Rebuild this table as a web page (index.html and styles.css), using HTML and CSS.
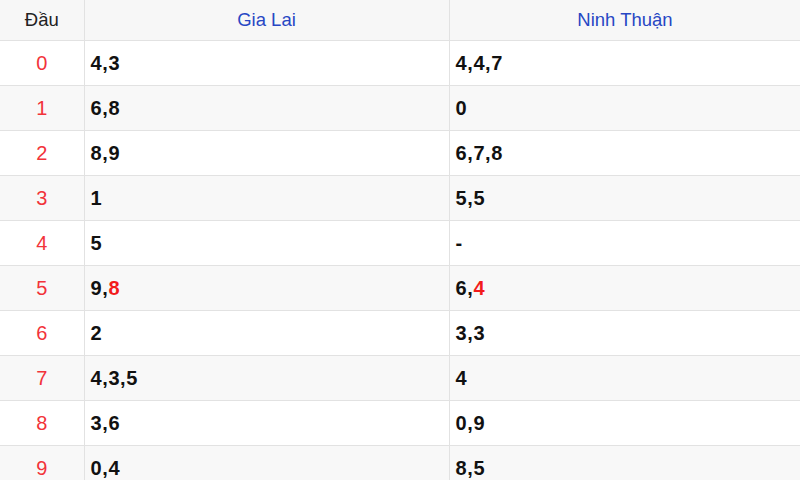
FILE: index.html
```html
<!DOCTYPE html>
<html>
<head>
<meta charset="utf-8">
<link rel="stylesheet" href="styles.css">
</head>
<body>
<table class="loto">
  <colgroup>
    <col class="c-head">
    <col class="c-a">
    <col class="c-b">
  </colgroup>
  <thead>
    <tr><th>Đầu</th><th class="prov">Gia Lai</th><th class="prov">Ninh Thuận</th></tr>
  </thead>
  <tbody>
    <tr><td class="dau">0</td><td class="num">4,3</td><td class="num">4,4,7</td></tr>
    <tr><td class="dau">1</td><td class="num">6,8</td><td class="num">0</td></tr>
    <tr><td class="dau">2</td><td class="num">8,9</td><td class="num">6,7,8</td></tr>
    <tr><td class="dau">3</td><td class="num">1</td><td class="num">5,5</td></tr>
    <tr><td class="dau">4</td><td class="num">5</td><td class="num">-</td></tr>
    <tr><td class="dau">5</td><td class="num">9,<span class="hot">8</span></td><td class="num">6,<span class="hot">4</span></td></tr>
    <tr><td class="dau">6</td><td class="num">2</td><td class="num">3,3</td></tr>
    <tr><td class="dau">7</td><td class="num">4,3,5</td><td class="num">4</td></tr>
    <tr><td class="dau">8</td><td class="num">3,6</td><td class="num">0,9</td></tr>
    <tr><td class="dau">9</td><td class="num">0,4</td><td class="num">8,5</td></tr>
  </tbody>
</table>
</body>
</html>
```
FILE: styles.css
```css
html, body {
  margin: 0;
  padding: 0;
  background: #ffffff;
}
body {
  font-family: "Liberation Sans", Arial, sans-serif;
  overflow: hidden;
}
.loto {
  width: 801px;
  border-collapse: collapse;
  table-layout: fixed;
}
.c-head { width: 84px; }
.c-a { width: 365px; }
.c-b { width: 352px; }
.loto th, .loto td {
  border-right: 1px solid #e2e2e2;
  border-bottom: 1px solid #e2e2e2;
  padding: 0 6px;
}
.loto th {
  height: 40px;
  background: #f7f7f7;
  font-weight: normal;
  font-size: 18.5px;
  color: #222;
  text-align: center;
}
.loto th.prov {
  color: #2747c4;
}
.loto td {
  height: 44px;
}
.loto tbody tr:nth-child(even) td {
  background: #f8f8f8;
}
.dau {
  text-align: center;
  color: #f2333a;
  font-size: 20px;
}
.num {
  text-align: left;
  font-weight: bold;
  font-size: 20px;
  color: #111;
  letter-spacing: 0.6px;
}
.hot {
  color: #f21c1c;
}
```
